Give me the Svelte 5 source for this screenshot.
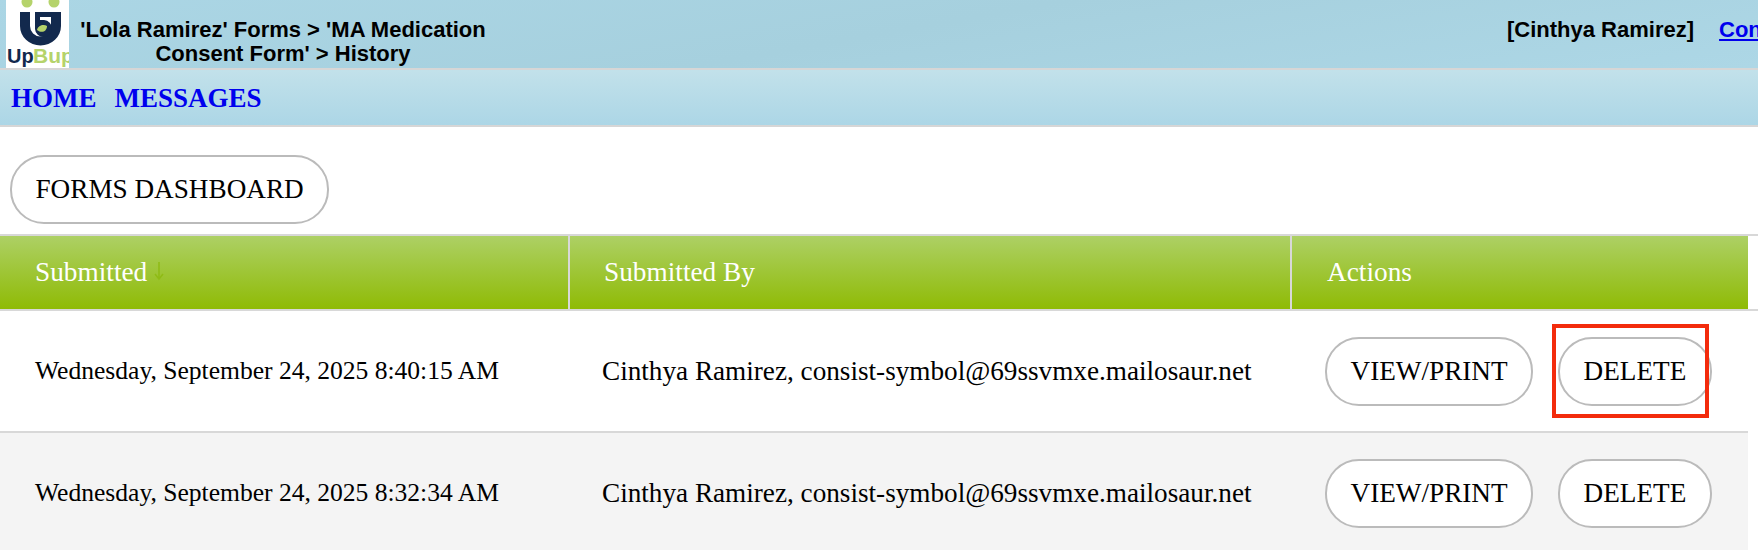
<script>
  const rows = [
    { date: 'Wednesday, September 24, 2025 8:40:15 AM', marked: true },
    { date: 'Wednesday, September 24, 2025 8:32:34 AM', marked: false }
  ];
  const by = 'Cinthya Ramirez, consist-symbol@69ssvmxe.mailosaur.net';
</script>

<div class="page">
  <header class="top">
    <div class="logo">
      <svg width="63" height="68" viewBox="0 0 63 68">
        <rect width="63" height="68" fill="#fff" />
        <circle cx="21" cy="2" r="5.500" fill="#b5d36b" />
        <circle cx="48" cy="2" r="5.500" fill="#b5d36b" />
        <path d="M14 12h10v14a10.500 10.500 0 0 0 21 0V12h10v14a20.500 19.500 0 0 1-41 0z" fill="#12294d" />
        <path d="M29 12h17v5h-12v3h4a8.500 8.500 0 1 1-9 9z" fill="#12294d" />
        <path d="M31 30c1-5 7-6 10-4 0 5-5 8-10 4z" fill="#b5d36b" />
        <text x="1" y="63" class="up">Up</text>
        <text x="27" y="63" class="bup">Bup</text>
      </svg>
    </div>
    <h1 class="title">'Lola Ramirez' Forms &gt; 'MA Medication Consent Form' &gt; History</h1>
    <div class="user">[Cinthya Ramirez]</div>
    <a class="contact" href="#top">Contact</a>
  </header>

  <nav class="menu">
    <a href="#top">HOME</a>
    <a href="#top">MESSAGES</a>
  </nav>

  <div class="toolbar">
    <button class="pill">FORMS DASHBOARD</button>
  </div>

  <div class="head-line">
    <div class="row head">
      <div class="cell">
        Submitted
        <svg class="sort" width="12" height="20" viewBox="0 0 12 20">
          <path d="M6 1v17M2 13l4 5 4-5" fill="none" stroke="#8fbb15" stroke-width="1.500" />
        </svg>
      </div>
      <div class="cell">Submitted By</div>
      <div class="cell">Actions</div>
    </div>
  </div>

  {#each rows as r, i}
    <div class="row body" class:alt={i % 2 === 1}>
      <div class="cell date">{r.date}</div>
      <div class="cell by">{by}</div>
      <div class="cell actions">
        <button class="pill">VIEW/PRINT</button>
        <span class="del">
          <button class="pill">DELETE</button>
          {#if r.marked}<span class="mark"></span>{/if}
        </span>
      </div>
    </div>
  {/each}
</div>

<style>
  :global(body) {
    margin: 0;
    background: #fff;
    overflow: hidden;
  }

  .page {
    width: 1758px;
    height: 550px;
    overflow: hidden;
    font-family: "Liberation Serif", serif;
    color: #000;
  }

  .top {
    display: flex;
    align-items: flex-start;
    height: 70px;
    padding-left: 6px;
    box-sizing: border-box;
    background: linear-gradient(170deg, #abd6e5 0%, #a6d0de 50%, #add7e6 100%);
    border-bottom: 2px solid #d6d6d6;
    overflow: hidden;
    font-family: "Liberation Sans", sans-serif;
    font-weight: bold;
    font-size: 22px;
  }

  .logo {
    flex: none;
    height: 68px;
    line-height: 0;
  }

  .up {
    font: bold 20px "Liberation Sans", sans-serif;
    fill: #12294d;
  }

  .bup {
    font: bold 21px "Liberation Sans", sans-serif;
    fill: #b5d36b;
  }

  .title {
    flex: none;
    width: 428px;
    margin: 18px 0 0;
    font-size: 22px;
    line-height: 24px;
    text-align: center;
  }

  .user {
    flex: none;
    margin: 18px 0 0 1010px;
    line-height: 24px;
    white-space: nowrap;
  }

  .contact {
    flex: none;
    margin: 18px 0 0 25px;
    line-height: 24px;
    color: #0000ee;
    white-space: nowrap;
  }

  .menu {
    display: flex;
    gap: 18px;
    height: 57px;
    padding: 13px 0 0 11px;
    box-sizing: border-box;
    background: linear-gradient(#c2e1ea, #acd6e6);
    border-bottom: 2px solid #d6d6d6;
  }

  .menu a {
    font-size: 27px;
    line-height: 31px;
    font-weight: bold;
    color: #0000ee;
    text-decoration: none;
  }

  .toolbar {
    padding: 28px 0 10px 10px;
  }

  .pill {
    display: block;
    height: 69px;
    padding: 0 23.5px;
    box-sizing: border-box;
    border: 2px solid #bbb;
    border-radius: 34px;
    background: #fff;
    color: #000;
    font-family: "Liberation Serif", serif;
    font-size: 27.2px;
  }

  .head-line {
    padding-right: 10px;
    border-top: 2px solid #d8d8d8;
    border-bottom: 2px solid #d8d8d8;
  }

  .row {
    display: grid;
    grid-template-columns: 568px 722px 1fr;
    width: 1748px;
    box-sizing: border-box;
  }

  .head {
    height: 73px;
    background: linear-gradient(#add065, #8fbb05);
    color: #fff;
    font-size: 27.3px;
  }

  .head .cell {
    display: flex;
    align-items: center;
    gap: 6px;
    padding-left: 35px;
  }

  .head .cell + .cell {
    border-left: 2px solid #d8d8d8;
    padding-left: 34px;
  }

  .head .cell:last-child {
    padding-left: 35px;
  }

  .sort {
    margin-top: -4px;
  }

  .body {
    height: 122px;
    border-bottom: 2px solid #d8d8d8;
    font-size: 27.2px;
  }

  .body.alt {
    height: 120px;
    background: #f4f4f4;
    border-bottom: 0;
  }

  .body .cell {
    display: flex;
    align-items: center;
    padding-left: 35px;
  }

  .body .date {
    font-size: 25.6px;
    letter-spacing: -0.02px;
  }

  .body .by {
    padding-left: 34px;
  }

  .body .actions {
    gap: 25px;
    padding-left: 35px;
  }

  .del {
    position: relative;
    display: block;
  }

  .mark {
    position: absolute;
    top: -13px;
    left: -6px;
    width: 157px;
    height: 94px;
    box-sizing: border-box;
    border: 4px solid #f32b0c;
  }
</style>
